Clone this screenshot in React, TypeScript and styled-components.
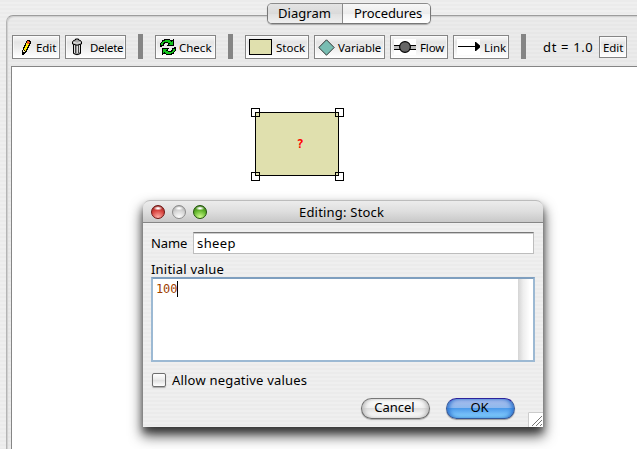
import React from "react";
import styled, { createGlobalStyle, css } from "styled-components";

const Global = createGlobalStyle`
  * { box-sizing: border-box; }
  html, body { margin: 0; padding: 0; overflow: hidden; }
  body { font-family: "Noto Sans", "Open Sans", sans-serif; font-size: 13px; color: #000; }
`;

const stripes = css`
  background: repeating-linear-gradient(to bottom, #ebebeb 0 2px, #efefef 2px 4px);
`;

const Window = styled.div`
  ${stripes}
  position: relative;
  width: 637px;
  height: 449px;
  padding: 15px 0 0 6px;
  overflow: hidden;
`;

const Pane = styled.main`
  height: 450px;
  padding: 18px 0 0 4px;
  border: 1px solid #9c9c9c;
  border-color: #9c9c9c transparent transparent #b4b4b4;
  border-width: 1px 0 0 1px;
  border-top-left-radius: 7px;
  background: repeating-linear-gradient(to bottom, #e7e7e7 0 2px, #ebebeb 2px 4px);
  box-shadow: inset 1px 1px 1px #cfcfcf;
`;

const Tabs = styled.nav`
  position: absolute;
  left: 267px;
  top: 3px;
  display: flex;
  width: 164px;
  height: 21px;
  border: 1px solid #777;
  border-top-color: #8c8c8c;
  border-radius: 5px;
  overflow: hidden;
  box-shadow: 0 1px 1px #aaa;
`;

const Tab = styled.div<{ $on?: boolean; $w: number }>`
  width: ${(p) => p.$w}px;
  padding-left: ${(p) => (p.$on ? 10 : 11)}px;
  line-height: 19px;
  letter-spacing: ${(p) => (p.$on ? 0.04 : -0.1)}px;
  white-space: nowrap;
  border-right: ${(p) => (p.$on ? "1px solid #8b8b8b" : "0")};
  background: ${(p) =>
    p.$on
      ? "linear-gradient(#e4e4e4, #dadada 50%, #e0e0e0 52%, #eee)"
      : "linear-gradient(#f7f7f7, #ececec 50%, #f4f4f4 52%, #fff)"};
`;

const Toolbar = styled.div`
  display: flex;
  align-items: flex-start;
  height: 32px;
  padding-left: 1px;
`;

const ToolButton = styled.button<{ $w: number; $gap?: number; $small?: boolean; $ls?: number }>`
  display: flex;
  align-items: center;
  flex: none;
  gap: ${(p) => p.$gap ?? 3}px;
  width: ${(p) => p.$w}px;
  height: ${(p) => (p.$small ? 22 : 24)}px;
  margin: ${(p) => (p.$small ? "2px 0 0 5px" : "1px 5px 0 0")};
  padding: 0 0 0 3px;
  border: 1px solid #858585;
  background: linear-gradient(#f6f6f6 0, #f0f0f0 3px, #e4e4e4 6px, #ededed 55%, #fff);
  box-shadow: inset 0 0 0 1px rgba(255, 255, 255, 0.6);
  font: 11.5px "Noto Sans", sans-serif;
  letter-spacing: ${(p) => p.$ls ?? 0}px;
  color: #000;
  white-space: nowrap;
  svg { flex: none; }
`;

const Separator = styled.div`
  flex: none;
  width: 5px;
  height: 25px;
  margin: 0 12px 0 7px;
  background: #858585;
`;

const Step = styled.span`
  margin-left: 5px;
  width: 51px;
  line-height: 27px;
  letter-spacing: 0.65px;
  white-space: nowrap;
`;

const Canvas = styled.section`
  position: relative;
  height: 400px;
  border-top: 1px solid #858585;
  border-left: 1px solid #858585;
  background: #fff;
`;

const StockNode = styled.div`
  position: absolute;
  left: 243px;
  top: 45px;
  display: flex;
  align-items: center;
  justify-content: center;
  width: 84px;
  height: 64px;
  padding-left: 6px;
  border: 1px solid #000;
  background: #e0e0ae;
  color: #f00;
  font: bold 12px "DejaVu Sans Mono", monospace;
`;

const Handle = styled.i<{ $right?: boolean; $bottom?: boolean }>`
  position: absolute;
  left: ${(p) => (p.$right ? 79 : -5)}px;
  top: ${(p) => (p.$bottom ? 59 : -5)}px;
  width: 9px;
  height: 9px;
  border: 1px solid #000;
`;

const Dialog = styled.div`
  ${stripes}
  position: absolute;
  left: 143px;
  top: 200px;
  width: 400px;
  height: 227px;
  border-radius: 7px 7px 0 0;
  box-shadow: 0 8px 13px 1px rgba(0, 0, 0, 0.7), 0 5px 6px rgba(0, 0, 0, 0.35);
`;

const TitleBar = styled.header`
  display: flex;
  align-items: center;
  height: 23px;
  padding: 1px 0 0 8px;
  gap: 7px;
  border: 1px solid #bcbcbc;
  border-width: 1px 0 1px;
  border-bottom-color: #858585;
  border-radius: 7px 7px 0 0;
  background: linear-gradient(#ececec, #dedede 50%, #c8c8c8);
`;

const Light = styled.i<{ $c: string; $dark: string; $glow: string }>`
  flex: none;
  width: 14px;
  height: 14px;
  border: 1px solid ${(p) => p.$dark};
  border-radius: 50%;
  background: radial-gradient(ellipse 4.5px 2.2px at 50% 19%, #fff 20%, rgba(255, 255, 255, 0) 100%),
    radial-gradient(circle at 50% 95%, ${(p) => p.$glow}, ${(p) => p.$c} 55%, ${(p) => p.$dark} 115%);
`;

const Title = styled.span`
  margin-left: 85px;
  line-height: 20px;
  letter-spacing: 0.2px;
  white-space: nowrap;
`;

const Form = styled.div`
  padding: 9px 8px 0;
`;

const NameRow = styled.label`
  display: flex;
  align-items: center;
  height: 22px;
  width: 383px;
`;

const NameText = styled.span`
  width: 42px;
  letter-spacing: -0.1px;
`;

const NameField = styled.div`
  flex: 1;
  height: 22px;
  padding-left: 3px;
  border: 1px solid #bdbdbd;
  border-top: 1px solid #777;
  box-shadow: inset 0 1px 0 #ccc;
  background: #fff;
  line-height: 21px;
  letter-spacing: 0.4px;
`;

const ValueLabel = styled.div`
  height: 23px;
  padding-top: 6px;
  line-height: 18px;
  letter-spacing: 0.2px;
`;

const ValueArea = styled.div`
  display: flex;
  justify-content: space-between;
  width: 384px;
  height: 85px;
  border: 2px solid #9cb9d3;
  border-top-color: #7f9fbf;
  background: #fff;
`;

const Typed = styled.span`
  height: 16px;
  margin: 2px 0 0 3px;
  border-right: 1px solid #000;
  color: #a04000;
  font: 12px/16px "DejaVu Sans Mono", monospace;
  letter-spacing: -0.1px;
`;

const Track = styled.div`
  width: 15px;
  background: linear-gradient(to right, #d4d4d4, #eee 35%, #fff 80%);
`;

const CheckRow = styled.label`
  display: flex;
  align-items: center;
  gap: 6px;
  height: 16px;
  margin: 10px 0 0 1px;
  letter-spacing: 0.2px;
`;

const Box = styled.i`
  width: 14px;
  height: 14px;
  border: 1px solid #6f6f6f;
  border-radius: 2px;
  background: linear-gradient(#fff, #ececec 45%, #e0e0e0 52%, #fff);
  box-shadow: 0 1px 1px #aaa;
`;

const Actions = styled.div`
  display: flex;
  gap: 16px;
  margin: 10px 0 0 210px;
`;

const Pill = styled.button<{ $primary?: boolean }>`
  width: 69px;
  height: 21px;
  padding: 0 2px 2px 0;
  border: 1px solid ${(p) => (p.$primary ? "#34589a" : "#6c6c6c")};
  border-top-color: ${(p) => (p.$primary ? "#2b229c" : "#777")};
  border-radius: 11px;
  background: ${(p) =>
    p.$primary
      ? "linear-gradient(#a8bbea 0, #8fb9ee 45%, #4d9bea 50%, #6fb8f6 75%, #8bdcff)"
      : "linear-gradient(#fff, #f2f2f2 45%, #dedede 50%, #f1f1f1 75%, #fff)"};
  box-shadow: ${(p) =>
    p.$primary
      ? "inset 3px 0 4px -1px #2e74d0, inset -3px 0 4px -1px #2e74d0, 0 1px 1px #999"
      : "inset 3px 0 4px -1px #bbb, inset -3px 0 4px -1px #bbb, 0 1px 1px #aaa"};
  color: #000;
  font: 13px/17px "Noto Sans", sans-serif;
`;

const Grip = styled.svg`
  position: absolute;
  right: 0;
  bottom: 0;
`;

const PencilIcon = () => (
  <svg width="19" height="18" viewBox="0 0 19 18" shapeRendering="crispEdges">
    <path d="M11 2h3v1h1v3h-1v2h-1v2h-1v2h-1v2h-1v1H9v1H8v1H6v-5h1V9h1V7h1V5h1V3h1z" fill="#000" />
    <path d="M10 5h1v1h2v1h-1v2h-1v2h-1v2H9v-1H8v-2h1V8h1z" fill="#ffed00" />
    <path d="M11 3h2v1h1v1h-1v1h-2z" fill="#f45a20" />
    <path d="M7 12h1v1h1v1H7z" fill="#fff4c0" />
  </svg>
);

const TrashIcon = () => (
  <svg width="18" height="18" viewBox="0 0 18 18">
    <path d="M4.500 5.500v10q3.500 2.500 7 0v-10z" fill="#999" stroke="#000" />
    <path d="M6.500 7v8M9.500 7v8" stroke="#444" />
    <path d="M5.500 7v8M8.500 7v8M10.500 7v7" stroke="#ddd" />
    <path d="M3.500 4Q4 2 6.500 2V1h3v1q2.500 0 3 2v2q-4.500 2.500-9 0z" fill="#aaa" stroke="#000" />
    <path d="M4.500 4.500q4 1.500 7 0" stroke="#eee" fill="none" />
  </svg>
);

const CheckIcon = () => (
  <svg width="18" height="18" viewBox="0 0 18 18" shapeRendering="crispEdges" stroke="#000" strokeWidth="1">
    <path d="M1.500 8.500V6l2-3 3-1.500h4l2 1.500 2-1.500v6h-6l1.500-2-1.500-1H6L4.500 6v1z" fill="#12c41b" />
    <path d="M16.500 9.500V12l-2 3-3 1.500h-4l-2-1.500-2 1.500v-6h6l-1.500 2 1.500 1H12l1.500-1.500V11z" fill="#12c41b" />
  </svg>
);

const StockIcon = () => (
  <svg width="23" height="16" viewBox="0 0 23 16">
    <rect x=".5" y=".5" width="22" height="15" fill="#e0e0ae" stroke="#000" />
  </svg>
);

const VariableIcon = () => (
  <svg width="17" height="17" viewBox="0 0 17 17">
    <path d="M8.500.8l7.700 7.700-7.700 7.700L.8 8.500z" fill="#78bdb2" stroke="#222" strokeWidth=".9" />
  </svg>
);

const FlowIcon = () => (
  <svg width="22" height="16" viewBox="0 0 22 16">
    <rect width="22" height="16" fill="#fff" />
    <path d="M0 6h22v4H0z" fill="#bbb" />
    <path d="M0 6.500h22M0 10.500h22" stroke="#000" />
    <circle cx="11" cy="8" r="5.400" fill="#666" stroke="#000" strokeWidth="1.100" />
  </svg>
);

const LinkIcon = () => (
  <svg width="23" height="16" viewBox="0 0 23 16">
    <rect width="23" height="16" fill="#fff" />
    <path d="M1 7.500h17" stroke="#000" />
    <path d="M18 3h1l4 3.500v2L19 12h-1z" fill="#000" />
  </svg>
);

export default function App() {
  return (
    <Window>
      <Global />
      <Pane>
        <Toolbar>
          <ToolButton $w={48} $gap={1} $ls={-0.1}><PencilIcon />Edit</ToolButton>
          <ToolButton $w={61} $gap={3} $ls={-0.3}><TrashIcon />Delete</ToolButton>
          <Separator />
          <ToolButton $w={61} $gap={2}><CheckIcon />Check</ToolButton>
          <Separator />
          <ToolButton $w={64} $gap={4}><StockIcon />Stock</ToolButton>
          <ToolButton $w={71} $gap={3} $ls={-0.08}><VariableIcon />Variable</ToolButton>
          <ToolButton $w={58} $gap={4} $ls={-0.1}><FlowIcon />Flow</ToolButton>
          <ToolButton $w={56} $gap={4}><LinkIcon />Link</ToolButton>
          <Separator />
          <Step>dt = 1.0</Step>
          <ToolButton $w={28} $small $ls={-0.1}>Edit</ToolButton>
        </Toolbar>
        <Canvas>
          <StockNode>
            ?
            <Handle />
            <Handle $right />
            <Handle $bottom />
            <Handle $right $bottom />
          </StockNode>
        </Canvas>
      </Pane>
      <Tabs>
        <Tab $on $w={75}>Diagram</Tab>
        <Tab $w={87}>Procedures</Tab>
      </Tabs>
      <Dialog>
        <TitleBar>
          <Light $c="#d8443f" $dark="#6e1512" $glow="#ffb0a8" />
          <Light $c="#d4d4d4" $dark="#8c8c8c" $glow="#fff" />
          <Light $c="#62b52c" $dark="#1f5208" $glow="#d2ff90" />
          <Title>Editing: Stock</Title>
        </TitleBar>
        <Form>
          <NameRow>
            <NameText>Name</NameText>
            <NameField>sheep</NameField>
          </NameRow>
          <ValueLabel>Initial value</ValueLabel>
          <ValueArea>
            <Typed>100</Typed>
            <Track />
          </ValueArea>
          <CheckRow><Box />Allow negative values</CheckRow>
          <Actions>
            <Pill>Cancel</Pill>
            <Pill $primary>OK</Pill>
          </Actions>
        </Form>
        <Grip width="15" height="15" viewBox="0 0 15 15">
          <rect width="15" height="15" fill="#fff" />
          <path d="M.5 15V.5H15" stroke="#ccc" fill="none" />
          <path d="M4 14L14 4M8 14l6-6M12 14l2-2" stroke="#777" />
        </Grip>
      </Dialog>
    </Window>
  );
}
